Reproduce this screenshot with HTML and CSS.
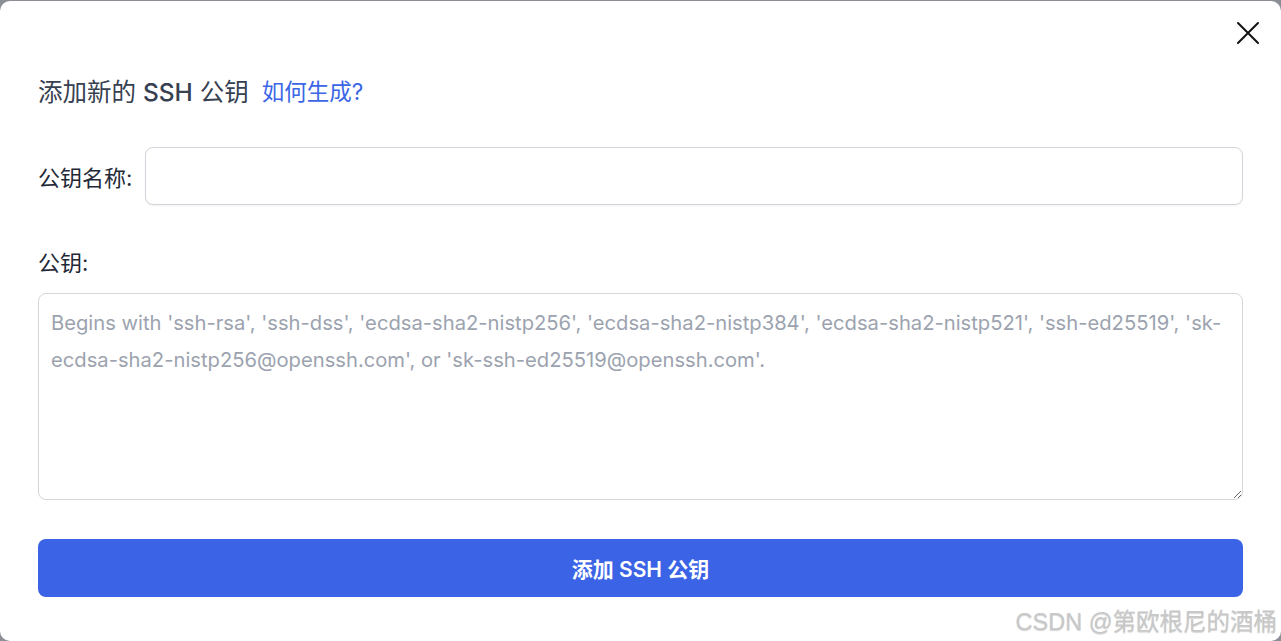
FILE: index.html
```html
<!DOCTYPE html>
<html lang="zh-CN">
<head>
    <meta charset="UTF-8">
    <meta name="viewport" content="width=device-width, initial-scale=1.0">
    <title>添加新的 SSH 公钥</title>
    <link rel="stylesheet" href="styles.css">
</head>
<body>
    <div class="modal">
        <button class="close-btn" aria-label="关闭">
            <svg width="24" height="24" viewBox="0 0 24 24" fill="none" stroke="#111" stroke-width="2" stroke-linecap="round">
                <path d="M2 2 L22 22 M22 2 L2 22"/>
            </svg>
        </button>

        <div class="modal-title">
            <span>添加新的 <b>SSH</b> 公钥</span>
            <a href="#" class="help-link">如何生成?</a>
        </div>

        <div class="form-row">
            <label for="keyName">公钥名称:</label>
            <input type="text" id="keyName" name="keyName">
        </div>

        <div class="form-block">
            <label for="keyValue">公钥:</label>
            <textarea id="keyValue" name="keyValue" placeholder="Begins with 'ssh-rsa', 'ssh-dss', 'ecdsa-sha2-nistp256', 'ecdsa-sha2-nistp384', 'ecdsa-sha2-nistp521', 'ssh-ed25519', 'sk-ecdsa-sha2-nistp256@openssh.com', or 'sk-ssh-ed25519@openssh.com'."></textarea>
        </div>

        <button class="submit-btn">添加 SSH 公钥</button>

        <div class="watermark">CSDN @第欧根尼的酒桶</div>
    </div>
</body>
</html>
```

FILE: styles.css
```css
html, body {
    height: 100%;
}
body {
    margin: 0;
    box-sizing: border-box;
    padding-top: 1px;
    background-color: #8b8e95;
    font-family: Inter, "Noto Sans CJK SC", sans-serif;
}
.modal {
    position: relative;
    box-sizing: border-box;
    height: 100%;
    background-color: #fff;
    border-radius: 10px;
    padding: 73px 38px 0 38px;
}
.close-btn {
    position: absolute;
    top: 20px;
    right: 21px;
    padding: 0;
    border: none;
    background: none;
    cursor: pointer;
}
.modal-title {
    display: flex;
    align-items: center;
    gap: 13px;
    font-size: 24.5px;
    line-height: 36px;
    color: #374151;
}
.modal-title b {
    font-weight: 500;
}
.help-link {
    color: #3b66e6;
    text-decoration: none;
    font-size: 22.5px;
}
.form-row {
    display: flex;
    align-items: center;
    gap: 13px;
    margin-top: 37px;
}
.form-row label,
.form-block label {
    font-size: 22px;
    color: #1f2937;
    white-space: nowrap;
}
.form-row input {
    flex: 1;
    height: 58px;
    box-sizing: border-box;
    border: 1px solid #d4d4dc;
    border-radius: 8px;
    box-shadow: 0 1px 2px rgba(0, 0, 0, 0.05);
}
.form-block {
    margin-top: 40px;
}
.form-block label {
    display: block;
    margin-bottom: 16px;
}
.form-block textarea {
    display: block;
    width: 100%;
    height: 207px;
    box-sizing: border-box;
    padding: 10px 12px;
    border: 1.5px solid #d4d6da;
    border-radius: 8px;
    font-family: Inter, "Noto Sans CJK SC", sans-serif;
    font-size: 20.2px;
    line-height: 37px;
    color: #1f2937;
    resize: vertical;
}
.form-block textarea::placeholder {
    color: #9ca3af;
}
.submit-btn {
    display: block;
    width: 100%;
    height: 58px;
    margin-top: 39px;
    border: none;
    border-radius: 8px;
    background-color: #3b63e6;
    color: #fff;
    font-family: Inter, "Noto Sans CJK SC", sans-serif;
    font-size: 21px;
    font-weight: 600;
    cursor: pointer;
}
.watermark {
    position: absolute;
    right: 4px;
    bottom: 4px;
    font-family: "Liberation Sans", "Noto Sans CJK SC", sans-serif;
    font-size: 23.5px;
    color: #c8c8c8;
    text-shadow: 0 1px 1px rgba(0, 0, 0, 0.18);
}
```
